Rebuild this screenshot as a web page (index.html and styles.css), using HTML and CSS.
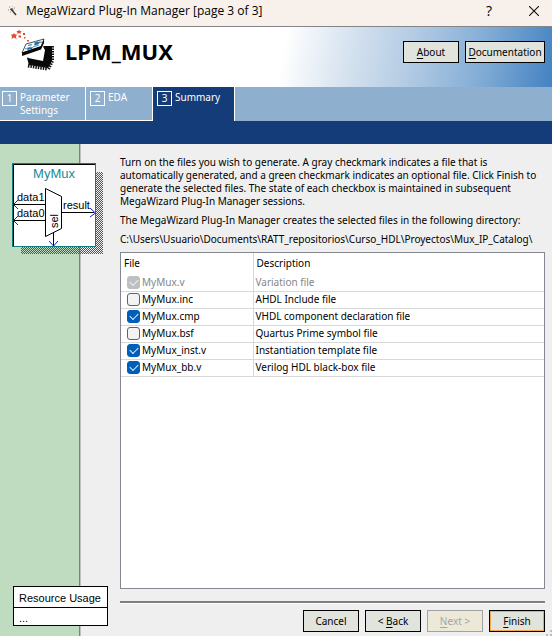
FILE: index.html
```html
<!DOCTYPE html>
<html lang="en">
<head>
<meta charset="utf-8">
<title>MegaWizard Plug-In Manager</title>
<link rel="stylesheet" href="styles.css">
</head>
<body>
<div class="window">
  <header class="titlebar">
    <svg class="wand" width="10" height="10" viewBox="0 0 10 10" aria-hidden="true">
      <path d="M3 3L8 9" stroke="#333" stroke-width="1.4"/>
      <path d="M1 1h1M4 0h1M6 2h1M0 4h1M2 6h1M5 4h1" stroke="#9a7f78"/>
      <path d="M2 3l2 1M4 2v2" stroke="#333"/>
    </svg>
    <span class="caption">MegaWizard Plug-In Manager [page 3 of 3]</span>
    <button class="winbtn" type="button" aria-label="Help">?</button>
    <button class="winbtn" type="button" aria-label="Close">
      <svg width="10" height="10" viewBox="0 0 10 10"><path d="M0 0L10 10M10 0L0 10" stroke="#111" stroke-width="1.1"/></svg>
    </button>
  </header>

  <div class="banner">
    <svg class="logo" width="48" height="48" viewBox="0 0 48 48" aria-hidden="true">
      <g fill="#dd4a2c">
        <path d="M4 3l1 1.500h2L6 6.500 6.500 9 4 7.500 1.500 9 2 6.500 1 4.500h2z"/>
        <path d="M9 0l1 1h1.500l-1 1.500.5 1.500-2-1-2 1 .5-1.500-1-1.500H8z"/>
        <path d="M8.500 5.500h2.500v2H8.500zM13 3h2v2h-2zM14 7h1.500v1.500H14zM17 10h2v1.500h-2z"/>
      </g>
      <path d="M34 16h8v15l-4 7-19-3-2-7z" fill="#080808"/>
      <path d="M42.500 16v15l-4 8" stroke="#111" stroke-width="3" stroke-dasharray="1.500 1" fill="none"/>
      <path d="M18 35.500l19 3" stroke="#111" stroke-width="4" stroke-dasharray="1.500 1"/>
      <path d="M32 15l3 5-2 11-15-3 2-6z" fill="#fff"/>
      <path d="M12 23l4-9 18-5-3 8z" fill="#fff" stroke="#222" stroke-width=".8"/>
      <path d="M12 22.500l19-6.500 3-7v4l-3 6.500-19 6.500z" fill="#080808"/>
      <path d="M15 19l6-2M18 15.500l4-1M23 17l6-2M28 13l4-1M24 12.500l4-1" stroke="#58a3cc" stroke-width="1.300"/>
      <path d="M18 18l5-1-1 2-5 1zM25 12.500l5-1-2 3-4 1z" fill="#23699c"/>
    </svg>
    <h1>LPM_MUX</h1>
    <div class="links">
      <button class="btn" type="button"><u>A</u>bout</button>
      <button class="btn wide" type="button"><u>D</u>ocumentation</button>
    </div>
  </div>

  <nav class="tabs">
    <button class="tab t1" type="button"><span class="num">1</span><span>Parameter<br>Settings</span></button>
    <button class="tab t2" type="button"><span class="num">2</span><span>EDA</span></button>
    <button class="tab t3 active" type="button"><span class="num">3</span><span>Summary</span></button>
  </nav>
  <div class="strip"></div>

  <div class="body">
    <aside class="side">
      <svg class="symbol" width="91" height="91" viewBox="0 0 91 91" role="img" aria-label="MyMux block symbol">
        <defs>
          <pattern id="dots" width="2" height="2" patternUnits="userSpaceOnUse">
            <path d="M0 0h1v1H0zM1 1h1v1H1z" fill="#3f6350"/>
          </pattern>
        </defs>
        <rect x="9" y="9" width="82" height="82" fill="url(#dots)" shape-rendering="crispEdges"/>
        <rect x=".5" y=".5" width="83" height="83" fill="#fff" stroke="#0b7f7f"/>
        <path d="M1.500 83V1.500H83" fill="none" stroke="#000"/>
        <text class="sym-name" x="42" y="15" text-anchor="middle">MyMux</text>
        <path d="M1 41.500h32M1 57.500h32M49 49.500h33M41.500 70v13" stroke="#000"/>
        <path d="M33.500 25.500l16 8v32l-16 8z" fill="#fff" stroke="#000"/>
        <path d="M6 37L1.500 41.500 6 46M6 53L1.500 57.500 6 62M78 45l5.500 5-5.500 4M37 78l4.500 5 4.500-5" fill="none" stroke="#1a1ad0"/>
        <text x="5" y="38">data1</text>
        <text x="5" y="54">data0</text>
        <text x="51" y="46">result</text>
        <text x="46" y="65" transform="rotate(-90 46 65)">sel</text>
      </svg>
      <div class="usage">
        <div class="usage-head">Resource Usage</div>
        <div class="usage-val">...</div>
      </div>
    </aside>

    <main class="main">
      <p>Turn on the files you wish to generate. A gray checkmark indicates a file that is<br>automatically generated, and a green checkmark indicates an optional file. Click Finish to<br>generate the selected files. The state of each checkbox is maintained in subsequent<br>MegaWizard Plug-In Manager sessions.</p>
      <p>The MegaWizard Plug-In Manager creates the selected files in the following directory:</p>
      <p>C:\Users\Usuario\Documents\RATT_repositorios\Curso_HDL\Proyectos\Mux_IP_Catalog\</p>
      <div class="list">
        <table>
          <thead><tr><th class="c1">File</th><th>Description</th></tr></thead>
          <tbody>
            <tr class="off"><td><label><input type="checkbox" checked disabled>MyMux.v</label></td><td>Variation file</td></tr>
            <tr><td><label><input type="checkbox">MyMux.inc</label></td><td>AHDL Include file</td></tr>
            <tr><td><label><input type="checkbox" checked>MyMux.cmp</label></td><td>VHDL component declaration file</td></tr>
            <tr><td><label><input type="checkbox">MyMux.bsf</label></td><td>Quartus Prime symbol file</td></tr>
            <tr><td><label><input type="checkbox" checked>MyMux_inst.v</label></td><td>Instantiation template file</td></tr>
            <tr><td><label><input type="checkbox" checked>MyMux_bb.v</label></td><td>Verilog HDL black-box file</td></tr>
          </tbody>
        </table>
      </div>
      <div class="rule"></div>
      <footer class="actions">
        <button class="btn" type="button">Cancel</button>
        <button class="btn" type="button">&lt; <u>B</u>ack</button>
        <button class="btn" type="button" disabled><u>N</u>ext &gt;</button>
        <button class="btn default" type="button"><u>F</u>inish</button>
      </footer>
    </main>
  </div>
  <svg class="grip" width="6" height="6" viewBox="0 0 6 6" aria-hidden="true"><path d="M4 0h2v2H4zM0 4h2v2H0zM4 4h2v2H4z" fill="#bdbdbd"/></svg>
</div>
</body>
</html>
```
FILE: styles.css
```css
* { box-sizing: border-box; }
body {
  margin: 0;
  font: 10px/13px "Noto Sans", sans-serif;
  color: #000;
  background: #efefef;
}
button { font: inherit; color: inherit; padding: 0; }
p { margin: 0 0 6px; white-space: nowrap; }
.window {
  position: relative;
  min-height: 100vh;
  display: flex;
  flex-direction: column;
  overflow: hidden;
}
.titlebar {
  display: flex;
  align-items: center;
  height: 27px;
  padding-left: 8px;
  padding-bottom: 4px;
  background: #f8f0eb;
  border-bottom: 1px solid #858588;
  font: 12px/16px "Open Sans", "Noto Sans", sans-serif;
}
.caption { flex: 1; margin-left: 8px; }
.winbtn {
  width: 45px;
  height: 22px;
  padding-left: 9px;
  border: 0;
  background: none;
  font-size: 14px;
}
.banner {
  display: flex;
  align-items: flex-start;
  height: 60px;
  padding: 3px 7px 0 10px;
  background: linear-gradient(100deg, #fff 51%, #d5e2ef 63%, #b3cbe4 74%, #86afd7 86%, #4482c2 100%);
}
h1 {
  flex: 1;
  margin: 8px 0 0 7px;
  font: bold 22px/26px "Noto Sans", sans-serif;
}
.links { display: flex; gap: 6px; margin-top: 11px; }
.btn {
  width: 56px;
  height: 22px;
  border: 1px solid #000;
  background: #e1e3dd;
}
.btn u { text-underline-offset: 2px; }
.btn.wide { width: 80px; }
.btn:disabled { border-color: #a2a2a2; background: #ece9d8; color: #a5a5a5; }
.btn.default { box-shadow: inset 0 0 0 1px #f5a94e; }
.tabs { display: flex; height: 34px; background: #8eafcd; }
.tab {
  display: flex;
  gap: 3px;
  align-items: flex-start;
  padding: 4px 0 0 2px;
  border: solid #fff;
  border-width: 0 1px 1px 0;
  background: #8eafcd;
  color: #fff;
  text-align: left;
}
.tab.active { background: #143c78; border-bottom: 0; padding-left: 4px; }
.num {
  width: 15px;
  height: 15px;
  border: 1px solid #fff;
  text-align: center;
}
.t1 { width: 86px; }
.t2 { width: 67px; padding-left: 4px; }
.t3 { width: 82px; }
.strip { height: 23px; background: #143c78; }
.body { flex: 1; display: grid; grid-template-columns: 81px 1fr; }
.side {
  display: flex;
  flex-direction: column;
  justify-content: space-between;
  padding: 19px 0 10px 12px;
  background: #c0dcc0;
  border-right: 1px solid #c0c0c0;
  box-shadow: inset -1px 0 #808080;
  font: 11px/20px "Liberation Sans", Arial, sans-serif;
}
.symbol {
  position: relative;
  flex: none;
}
.sym-name { font-size: 13px; fill: #178a96; }
.usage {
  position: relative;
  width: 95px;
  margin-left: 1px;
  border: 1px solid #000;
  background: #fff;
}
.usage-head { height: 21px; padding: 1px 5px 0; border-bottom: 1px solid #000; white-space: nowrap; }
.usage-val { height: 17px; padding-left: 5px; }
.main {
  display: flex;
  flex-direction: column;
  min-width: 0;
  padding: 12px 7px 4px 39px;
}
.list {
  flex: 1;
  margin-bottom: 12px;
  border: 1px solid #828790;
  background: #fff;
}
table { width: 100%; border-collapse: collapse; table-layout: fixed; }
th, td { height: 17px; padding: 0 2px; text-align: left; font-weight: normal; }
th { height: 21px; padding: 0 3px; }
.c1 { width: 132px; }
td { border-bottom: 1px solid #d8d8d8; }
th + th, td + td { border-left: 1px solid #d8d8d8; }
td:first-child { padding-left: 6px; }
label { display: flex; align-items: center; gap: 2px; }
input {
  appearance: none;
  width: 13px;
  height: 13px;
  margin: 0;
  border: 1px solid #626262;
  border-radius: 3px;
  background: #f3f3f3;
  display: grid;
  place-items: center;
}
input:checked { border-color: #005fb8; background: #005fb8; }
input:checked::after {
  content: "";
  width: 7px;
  height: 4px;
  margin-bottom: 2px;
  border: solid #e8f2fb;
  border-width: 0 0 1px 1px;
  rotate: -45deg;
}
input:disabled { border-color: #bfbfbf; background: #bfbfbf; }
.off { color: #858585; }
.rule { height: 3px; background: #808080; border-bottom: 1px solid #fff; }
.actions { display: flex; justify-content: flex-end; gap: 6px; margin-top: 6px; }
.grip { position: absolute; right: 0; bottom: 0; }
```
